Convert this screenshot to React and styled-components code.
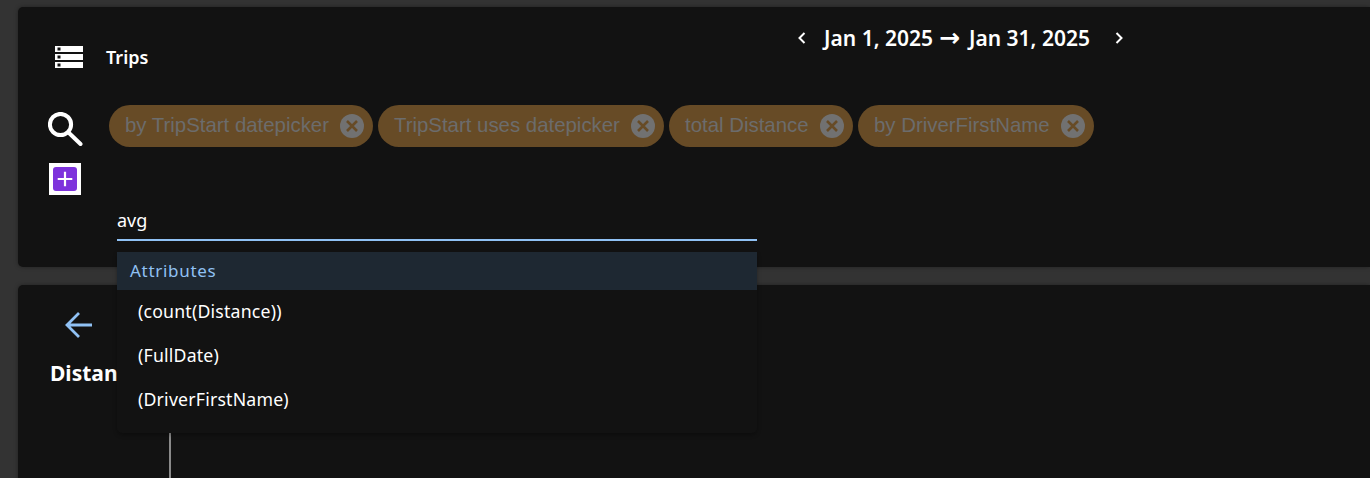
import React from 'react';
import styled, { createGlobalStyle } from 'styled-components';

const GlobalStyle = createGlobalStyle`
  html, body {
    margin: 0;
    height: 100%;
    background: #333333;
    overflow: hidden;
  }
  body {
    font-family: "Noto Sans", "Open Sans", sans-serif;
    color: #fff;
  }
`;

const Page = styled.div`
  display: flex;
  flex-direction: column;
  gap: 18px;
  height: 478px;
  padding: 7px 0 0 18px;
  box-sizing: border-box;
  overflow: hidden;
`;

const Card = styled.section`
  background: #121212;
  border-radius: 5px 0 0 5px;
  box-shadow: 0 0 4px rgba(0, 0, 0, 0.35);
`;

const TopCard = styled(Card)`
  position: relative;
  z-index: 2;
  height: 260px;
  flex: none;
  padding: 17px 0 0 30px;
  box-sizing: border-box;
`;

const BottomCard = styled(Card)`
  flex: 1;
  padding: 26px 0 0 32px;
  border-radius: 5px 0 0 0;
`;

const Header = styled.header`
  display: flex;
  align-items: flex-start;
  height: 81px;
`;

const TitleGroup = styled.div`
  display: flex;
  align-items: center;
  gap: 23px;
  width: 749px;
  padding: 18px 0 0 7px;
  box-sizing: border-box;
`;

const Title = styled.h1`
  margin: 0;
  font-size: 18px;
  font-weight: 600;
  line-height: 30px;
`;

const DateNav = styled.div`
  display: flex;
  align-items: center;
  gap: 17px;
  height: 28px;
`;

const DateLabel = styled.div`
  font-size: 21px;
  font-weight: 600;
  line-height: 28px;
  white-space: nowrap;
`;

const DateArrow = styled.span`
  margin: 0 9px 0 6px;
  font-family: "DejaVu Sans", sans-serif;
  font-weight: 700;
  font-size: 25px;
  line-height: 0;
`;

const NavIcon = styled.svg`
  display: block;
  width: 10px;
  height: 14px;
  margin-left: ${p => p.$offset || 0}px;
  fill: none;
  stroke: #fff;
  stroke-width: 2;
`;

const FilterArea = styled.div`
  display: flex;
  align-items: flex-start;
  gap: 27px;
`;

const ToolColumn = styled.div`
  display: flex;
  flex-direction: column;
  align-items: flex-start;
  gap: 16px;
  padding-top: 7px;
  width: 34px;
`;

const SearchIcon = styled.svg`
  display: block;
  width: 35px;
  height: 35px;
  fill: none;
  stroke: #fff;
`;

const AddBox = styled.button`
  display: flex;
  align-items: center;
  justify-content: center;
  width: 32px;
  height: 32px;
  margin-left: 1px;
  padding: 0;
  background: #fff;
  border: 0;
`;

const AddInner = styled.span`
  display: flex;
  align-items: center;
  justify-content: center;
  width: 24px;
  height: 24px;
  background: #7e33dc;
  border-radius: 3px;
`;

const FilterBody = styled.div`
  display: flex;
  flex-direction: column;
`;

const ChipRow = styled.div`
  display: flex;
  gap: 5px;
`;

const Chip = styled.div`
  display: flex;
  align-items: center;
  justify-content: space-between;
  height: 42px;
  width: ${p => p.$width}px;
  padding: 0 9px 1px 16px;
  box-sizing: border-box;
  background: #674b26;
  border-radius: 21px;
  color: #6c6c6c;
  font-family: "Liberation Sans", Arial, sans-serif;
  font-size: 20.4px;
  white-space: nowrap;
`;

const ChipClose = styled.svg`
  flex: none;
  width: 24px;
  height: 24px;
`;

const SearchField = styled.div`
  position: relative;
  width: 640px;
  margin: 50px 0 0 8px;
`;

const SearchInput = styled.input`
  display: block;
  width: 100%;
  height: 44px;
  padding: 4px 0 0;
  box-sizing: border-box;
  background: transparent;
  border: 0;
  border-bottom: 2px solid #90c1f4;
  outline: 0;
  color: #fff;
  font-family: inherit;
  font-size: 18px;
`;

const Dropdown = styled.div`
  position: absolute;
  top: 55px;
  left: 0;
  width: 100%;
  height: 181px;
  background: #121212;
  border-radius: 0 0 5px 5px;
  box-shadow: 0 2px 4px rgba(0, 0, 0, 0.3);
`;

const GroupLabel = styled.div`
  height: 38px;
  padding-left: 13px;
  background: #1e2832;
  color: #90c1f4;
  font-size: 17px;
  line-height: 38px;
  letter-spacing: 0.7px;
`;

const Option = styled.div`
  height: 44px;
  padding-left: 21px;
  font-size: 17.7px;
  line-height: 42px;
  letter-spacing: 0.2px;
`;

const BackIcon = styled.svg`
  display: block;
  width: 28px;
  height: 28px;
  margin-left: 15px;
  fill: none;
  stroke: #90c1f4;
  stroke-width: 2.8;
`;

const ChartTitle = styled.h2`
  margin: 19px 0 0;
  font-size: 21px;
  font-weight: 700;
  line-height: 30px;
`;

const Axis = styled.div`
  width: 2px;
  height: 200px;
  margin: 20px 0 0 119px;
  background: #8a8a8a;
`;

const ServerIcon = () => (
  <svg width="28" height="22" viewBox="0 0 28 22">
    {[0, 8, 16].map(y => (
      <g key={y}>
        <rect x="0" y={y} width="28" height="6" fill="#fff" />
        <rect x="2.5" y={y + 1.5} width="3" height="3" fill="#121212" />
      </g>
    ))}
  </svg>
);

const CloseGlyph = () => (
  <ChipClose viewBox="0 0 24 24">
    <circle cx="12" cy="12" r="12" fill="#717171" />
    <path d="M7 7l10 10M17 7L7 17" stroke="#674b26" strokeWidth="2.6" fill="none" />
  </ChipClose>
);

const chips = [
  { label: 'by TripStart datepicker', width: 264 },
  { label: 'TripStart uses datepicker', width: 286 },
  { label: 'total Distance', width: 184 },
  { label: 'by DriverFirstName', width: 236 },
];

const options = ['(count(Distance))', '(FullDate)', '(DriverFirstName)'];

export default function App() {
  return (
    <>
      <GlobalStyle />
      <Page>
        <TopCard>
          <Header>
            <TitleGroup>
              <ServerIcon />
              <Title>Trips</Title>
            </TitleGroup>
            <DateNav>
              <NavIcon viewBox="0 0 10 14">
                <path d="M7.5 2L2.5 7l5 5" />
              </NavIcon>
              <DateLabel>
                Jan 1, 2025<DateArrow>→</DateArrow>Jan 31, 2025
              </DateLabel>
              <NavIcon viewBox="0 0 10 14" $offset={7}>
                <path d="M2.5 2l5 5-5 5" />
              </NavIcon>
            </DateNav>
          </Header>
          <FilterArea>
            <ToolColumn>
              <SearchIcon viewBox="0 0 35 35">
                <circle cx="12.5" cy="12.5" r="10.6" strokeWidth="4" />
                <path d="M20.5 20.5L32.5 32" strokeWidth="4" strokeLinecap="round" />
              </SearchIcon>
              <AddBox aria-label="Add">
                <AddInner>
                  <svg width="16" height="16" viewBox="0 0 16 16">
                    <path d="M8 .7v14.6M.7 8h14.6" stroke="#fff" strokeWidth="2.2" />
                  </svg>
                </AddInner>
              </AddBox>
            </ToolColumn>
            <FilterBody>
              <ChipRow>
                {chips.map(c => (
                  <Chip key={c.label} $width={c.width}>
                    {c.label}
                    <CloseGlyph />
                  </Chip>
                ))}
              </ChipRow>
              <SearchField>
                <SearchInput defaultValue="avg" />
                <Dropdown>
                  <GroupLabel>Attributes</GroupLabel>
                  {options.map(o => (
                    <Option key={o}>{o}</Option>
                  ))}
                </Dropdown>
              </SearchField>
            </FilterBody>
          </FilterArea>
        </TopCard>
        <BottomCard>
          <BackIcon viewBox="0 0 28 28">
            <path d="M2 14h25M14 2L2 14l12 12" />
          </BackIcon>
          <ChartTitle>Distance</ChartTitle>
          <Axis />
        </BottomCard>
      </Page>
    </>
  );
}
